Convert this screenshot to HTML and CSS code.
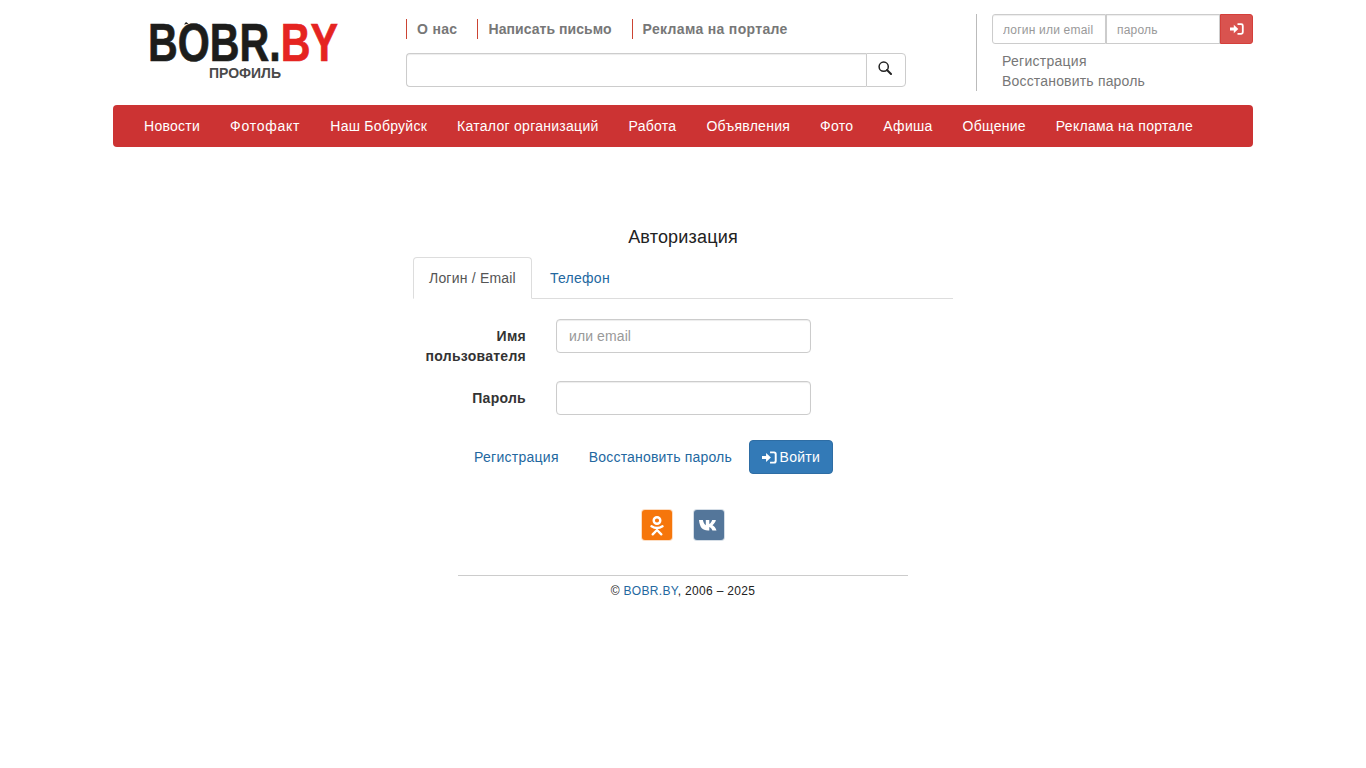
FILE: index.html
```html
<!DOCTYPE html>
<html lang="en">
<head>
    <meta charset="UTF-8">
    <meta name="viewport" content="width=device-width, initial-scale=1.0">
    <title>Авторизация</title>
    <link rel="stylesheet" href="styles.css">
</head>
<body>
    <div class="container">
        <div class="header">
            <div class="logo">
                <svg width="250" height="70" viewBox="0 0 250 70">
                    <text class="logo-text" x="3" y="47" textLength="190" lengthAdjust="spacingAndGlyphs">BOBR.<tspan class="logo-red">BY</tspan></text>
                    <path class="logo-tip" d="M39 10.500l2-2.500 2.500 1.800z"/>
                    <text class="logo-sub" x="100" y="64" text-anchor="middle">ПРОФИЛЬ</text>
                </svg>
            </div>
            <div class="header-mid">
                <div class="top-links">
                    <a href="#" class="top-link">О нас</a>
                    <a href="#" class="top-link top-link-narrow">Написать письмо</a>
                    <a href="#" class="top-link">Реклама на портале</a>
                </div>
                <div class="search">
                    <input type="text" class="search-input">
                    <button class="search-button">
                        <svg width="14" height="14" viewBox="0 0 14 14"><circle cx="5.700" cy="5.700" r="4.600" fill="none" stroke="#222" stroke-width="1.500"/><path d="M9 9l4 4" stroke="#222" stroke-width="2" stroke-linecap="round"/></svg>
                    </button>
                </div>
            </div>
            <div class="header-login">
                <div class="mini-login">
                    <input type="text" class="mini-input" placeholder="логин или email">
                    <input type="password" class="mini-input mini-pass" placeholder="пароль">
                    <button class="mini-button">
                        <svg width="14" height="14" viewBox="0 0 14 14"><path fill="#fff" d="M0 5.600h3.800V2.800L8.300 7l-4.500 4.200V8.400H0zM7.500 1.300h3.800a2.400 2.400 0 0 1 2.400 2.400v6.600a2.400 2.400 0 0 1-2.400 2.400H7.500v-1.800h3.500a.9.900 0 0 0 .9-.9V4a.9.900 0 0 0-.9-.9H7.500z"/></svg>
                    </button>
                </div>
                <a href="#" class="login-link">Регистрация</a>
                <a href="#" class="login-link restore">Восстановить пароль</a>
            </div>
        </div>

        <div class="nav">
            <a href="#">Новости</a>
            <a href="#" class="nav-wide">Фотофакт</a>
            <a href="#">Наш Бобруйск</a>
            <a href="#">Каталог организаций</a>
            <a href="#">Работа</a>
            <a href="#">Объявления</a>
            <a href="#">Фото</a>
            <a href="#">Афиша</a>
            <a href="#">Общение</a>
            <a href="#">Реклама на портале</a>
        </div>

        <div class="auth">
            <h3 class="auth-title">Авторизация</h3>
            <div class="tabs">
                <a href="#" class="tab active">Логин / Email</a>
                <a href="#" class="tab">Телефон</a>
            </div>
            <div class="form-row">
                <label class="form-label">Имя пользователя</label>
                <input type="text" class="form-input" placeholder="или email">
            </div>
            <div class="form-row">
                <label class="form-label">Пароль</label>
                <input type="password" class="form-input">
            </div>
            <div class="form-actions">
                <a href="#" class="action-link">Регистрация</a>
                <a href="#" class="action-link restore">Восстановить пароль</a>
                <button class="submit-button">
                    <svg width="15" height="15" viewBox="0 0 14 14"><path fill="#fff" d="M0 5.600h3.800V2.800L8.300 7l-4.500 4.200V8.400H0zM7.500 1.300h3.800a2.400 2.400 0 0 1 2.400 2.400v6.600a2.400 2.400 0 0 1-2.400 2.400H7.500v-1.800h3.500a.9.900 0 0 0 .9-.9V4a.9.900 0 0 0-.9-.9H7.500z"/></svg>
                    <span>Войти</span>
                </button>
            </div>
            <div class="social">
                <a href="#" class="social-icon ok">
                    <svg width="30" height="30" viewBox="0 0 30 30">
                        <circle cx="15" cy="10.500" r="3.300" fill="none" stroke="#fff" stroke-width="2.400"/>
                        <path d="M9.500 16.300c3.500 2.200 7.500 2.200 11 0M15 18v2.500M15 20l-4.300 4.300M15 20l4.300 4.300" fill="none" stroke="#fff" stroke-width="2.400" stroke-linecap="round"/>
                    </svg>
                </a>
                <a href="#" class="social-icon vk">
                    <svg width="30" height="30" viewBox="0 0 30 30">
                        <path fill="#fff" d="M5 10h3.900c.6 2.700 1.800 4.700 2.900 5.300V10h3.500v4c1.100-.4 2.300-2.100 2.900-4h3.700c-.5 2.400-2.100 4.200-3.400 5.200 1.500.8 3.100 2.400 4 5.300h-4.100c-.6-1.800-1.900-3-3.100-3.400v3.400h-1.300C8.200 20.500 5.700 17 5 10z"/>
                    </svg>
                </a>
            </div>
            <div class="footer">
                © <a href="#">BOBR.BY</a>, 2006 – 2025
            </div>
        </div>
    </div>
</body>
</html>
```

FILE: styles.css
```css
* {
    box-sizing: border-box;
}

body {
    margin: 0;
    background: #fff;
    color: #333;
    font-family: "Liberation Sans", Arial, sans-serif;
    font-size: 14px;
    line-height: 20px;
    letter-spacing: .27px;
}

a {
    color: #23689f;
    text-decoration: none;
}

input, button {
    font-family: inherit;
    letter-spacing: inherit;
}

.restore {
    letter-spacing: .18px;
}

.container {
    width: 1140px;
    margin: 0 auto;
}

/* header */
.header {
    display: flex;
    height: 105px;
}

.logo {
    width: 293px;
    padding: 14px 0 0 32px;
}

.logo-text {
    font-size: 53px;
    font-weight: bold;
    letter-spacing: 0;
    fill: #1d1d1b;
    stroke: #1d1d1b;
    stroke-width: .7px;
}

.logo-red {
    fill: #e52421;
    stroke: #e52421;
}

.logo-tip {
    fill: #1d1d1b;
}

.logo-sub {
    font-size: 14px;
    font-weight: bold;
    letter-spacing: 0;
    fill: #4a4a4a;
}

.header-mid {
    width: 570px;
    padding-top: 19px;
}

.top-links {
    display: flex;
    gap: 20px;
}

.top-link {
    border-left: 1px solid #cc4433;
    padding-left: 10px;
    color: #777;
    font-weight: bold;
    letter-spacing: .33px;
}

.top-link-narrow {
    letter-spacing: .06px;
}

.search {
    display: flex;
    width: 500px;
    margin-top: 14px;
}

.search-input {
    flex: 1;
    height: 34px;
    border: 1px solid #ccc;
    border-right: none;
    border-radius: 4px 0 0 4px;
    box-shadow: inset 0 1px 1px rgba(0, 0, 0, .075);
}

.search-button {
    width: 40px;
    height: 34px;
    border: 1px solid #ccc;
    border-radius: 0 4px 4px 0;
    background: #fff;
    padding: 0 2px 2px 0;
}

.header-login {
    flex: 1;
    margin-top: 14px;
    height: 77px;
    border-left: 1px solid #bbb;
    padding-left: 15px;
}

.mini-login {
    display: flex;
    height: 30px;
    margin-bottom: 7px;
}

.mini-input {
    width: 114px;
    height: 30px;
    border: 1px solid #ccc;
    border-radius: 3px 0 0 3px;
    padding: 2px 10px 0;
    font-size: 12px;
    letter-spacing: .2px;
    box-shadow: inset 0 1px 1px rgba(0, 0, 0, .075);
}

.mini-pass {
    border-radius: 0;
}

.mini-input::placeholder {
    color: #999;
    opacity: 1;
}

.mini-button {
    width: 33px;
    height: 30px;
    border: 1px solid #d43f3a;
    border-radius: 0 3px 3px 0;
    background: #d9534f;
    padding: 2px 0 0;
}

.login-link {
    display: block;
    padding-left: 10px;
    color: #777;
}

/* main menu */
.nav {
    display: flex;
    gap: 30px;
    height: 42px;
    padding-left: 31px;
    border-radius: 4px;
    background: #cc3333;
    align-items: center;
}

.nav a {
    color: #fff;
}

.nav .nav-wide {
    letter-spacing: .75px;
}

/* login form */
.auth {
    width: 540px;
    padding-top: 80px;
    margin-left: 300px;
}

.auth-title {
    margin: 0 0 10px;
    color: #222;
    font-size: 18px;
    font-weight: normal;
    line-height: 20px;
    letter-spacing: .18px;
    text-align: center;
}

.tabs {
    display: flex;
    gap: 2px;
    height: 42px;
    border-bottom: 1px solid #ddd;
    margin-bottom: 20px;
}

.tab {
    height: 42px;
    padding: 10px 15px;
    border: 1px solid transparent;
    border-radius: 4px 4px 0 0;
}

.tab.active {
    border-color: #ddd;
    border-bottom-color: #fff;
    color: #555;
    letter-spacing: .2px;
}

.form-row {
    display: flex;
    margin-bottom: 15px;
    min-height: 47px;
}

.form-label {
    width: 113px;
    margin: 0 30px 0 0;
    padding-top: 7px;
    color: #333;
    font-weight: bold;
    text-align: right;
}

.form-input {
    width: 255px;
    height: 34px;
    border: 1px solid #ccc;
    border-radius: 4px;
    padding: 6px 12px;
    font-size: 14px;
    letter-spacing: .1px;
    box-shadow: inset 0 1px 1px rgba(0, 0, 0, .075);
}

.form-input::placeholder {
    color: #999;
    opacity: 1;
}

.form-actions {
    display: flex;
    gap: 4px;
    padding-left: 48px;
    margin-top: -3px;
}

.action-link {
    padding: 7px 13px;
}

.submit-button {
    display: flex;
    align-items: center;
    justify-content: center;
    gap: 3px;
    width: 84px;
    height: 34px;
    border: 1px solid #2e6da4;
    border-radius: 4px;
    background: #337ab7;
    color: #fff;
    font-size: 14px;
    padding: 0;
    white-space: nowrap;
}

.social {
    display: flex;
    justify-content: center;
    gap: 22px;
    margin-top: 36px;
}

.social-icon {
    display: block;
    width: 30px;
    height: 30px;
    border-radius: 3px;
}

.social-icon svg {
    display: block;
}

.ok {
    background: #f6760b;
    box-shadow: 0 0 0 1px rgba(246, 118, 11, .25);
}

.vk {
    background: #54769a;
    box-shadow: 0 0 0 1px rgba(84, 118, 154, .25);
}

.footer {
    width: 450px;
    margin: 35px auto 0;
    border-top: 1px solid #ccc;
    padding-top: 5px;
    color: #222;
    font-size: 12px;
    letter-spacing: .33px;
    text-align: center;
}
```
